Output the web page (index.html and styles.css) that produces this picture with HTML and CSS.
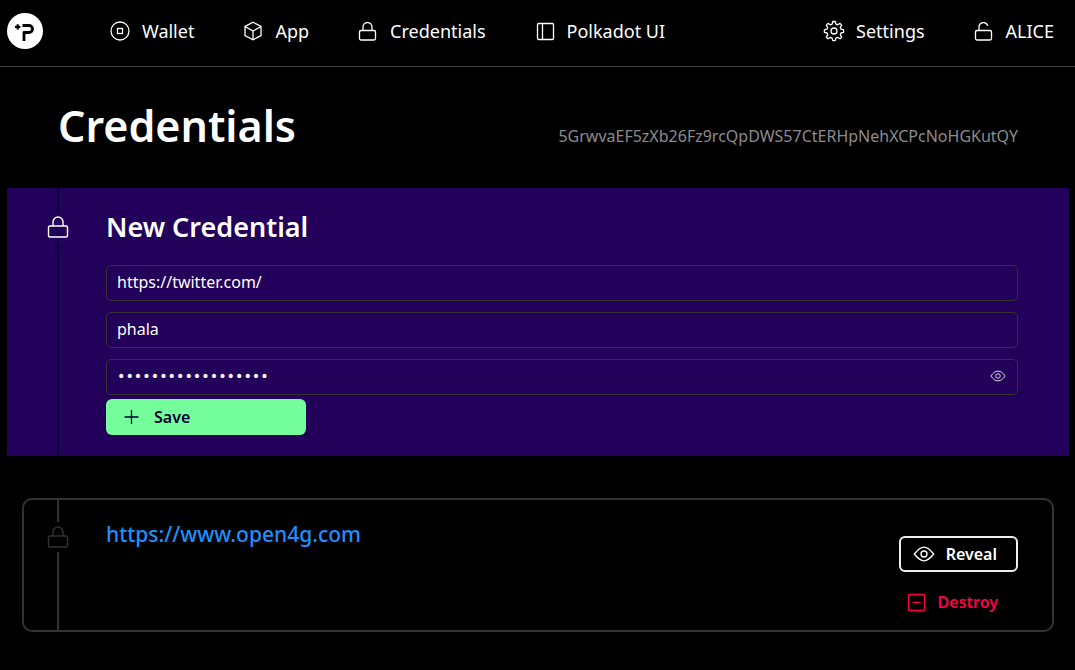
FILE: index.html
```html
<!DOCTYPE html>
<html lang="en">
<head>
<meta charset="utf-8">
<meta name="viewport" content="width=device-width, initial-scale=1">
<title>Credentials</title>
<link rel="stylesheet" href="styles.css">
</head>
<body>
<header class="topbar">
  <a class="logo" href="#" aria-label="Home">
    <svg viewBox="0 0 36 36" width="36" height="36" aria-hidden="true">
      <circle cx="18" cy="18" r="18" fill="#fff"/>
      <path d="M15.500 12.500h6.500a3.500 3.500 0 0 1 0 7h-5v8.500" fill="none" stroke="#000" stroke-width="2.800" stroke-linejoin="round"/>
      <path d="M10.700 11.200v5.400M8 13.900h5.400" stroke="#000" stroke-width="2.200"/>
    </svg>
  </a>
  <nav class="nav" aria-label="Main">
    <a class="nav-item" href="#">
      <svg class="icon" viewBox="0 0 24 24" aria-hidden="true"><circle cx="12" cy="12" r="9"/><rect x="9.500" y="9.500" width="5" height="5"/></svg>
      <span>Wallet</span>
    </a>
    <a class="nav-item" href="#">
      <svg class="icon" viewBox="0 0 24 24" aria-hidden="true"><path d="M12 3.200l8 4.300v9L12 20.800l-8-4.300v-9zM4 7.500l8 4.600 8-4.600M12 12.100v8.700"/></svg>
      <span>App</span>
    </a>
    <a class="nav-item" href="#">
      <svg class="icon" viewBox="0 0 24 24" aria-hidden="true"><rect x="3.500" y="11.500" width="16" height="9.500" rx="1.500"/><path d="M7 11.500V8a4.500 4.500 0 0 1 9 0v3.500"/></svg>
      <span>Credentials</span>
    </a>
    <a class="nav-item" href="#">
      <svg class="icon" viewBox="0 0 24 24" aria-hidden="true"><rect x="4.500" y="4.500" width="16" height="16" rx="1.200"/><path d="M9.500 4.500v16"/></svg>
      <span>Polkadot UI</span>
    </a>
  </nav>
  <nav class="nav" aria-label="Account">
    <a class="nav-item" href="#">
      <svg class="icon" viewBox="0 0 24 24" aria-hidden="true"><path d="M10.800 2.500h2.400l.7 2.600 1.700.7 2.400-1.400 1.700 1.700-1.400 2.400.7 1.700 2.600.7v2.400l-2.600.7-.7 1.700 1.400 2.400-1.700 1.700-2.400-1.400-1.700.7-.7 2.600h-2.400l-.7-2.600-1.700-.7L6 19.800l-1.700-1.700 1.400-2.400-.7-1.700-2.600-.7v-2.400L5 10.200l.7-1.700-1.400-2.400L6 4.400l2.400 1.400 1.700-.7z" stroke-linejoin="round"/><circle cx="12" cy="12" r="3"/></svg>
      <span>Settings</span>
    </a>
    <a class="nav-item" href="#">
      <svg class="icon" viewBox="0 0 24 24" aria-hidden="true"><rect x="3.500" y="11.500" width="16" height="9.500" rx="1.500"/><path d="M7 11.500V8a4.500 4.500 0 0 1 8.800-1.200"/></svg>
      <span>ALICE</span>
    </a>
  </nav>
</header>
<main>
  <div class="heading">
    <h1>Credentials</h1>
    <p class="address">5GrwvaEF5zXb26Fz9rcQpDWS57CtERHpNehXCPcNoHGKutQY</p>
  </div>
  <section class="panel panel-new">
    <div class="rail">
      <svg class="rail-icon" viewBox="0 0 30 30" aria-hidden="true"><rect x="5.500" y="14" width="19" height="11" rx="1.500"/><path d="M10 14v-4a5 5 0 0 1 10 0v4"/></svg>
    </div>
    <form class="form">
      <h2>New Credential</h2>
      <div class="fields">
        <input class="field" type="text" aria-label="URL" value="https://twitter.com/">
        <input class="field" type="text" aria-label="Username" value="phala">
        <div class="field secret">
          <input type="password" aria-label="Password" value="correcthorsebatter">
          <button class="peek" type="button" aria-label="Show password">
            <svg viewBox="0 0 24 24" width="18" height="18" aria-hidden="true"><path d="M2.500 12C5.500 8 8 5.500 12 5.500S18.500 8 21.500 12C18.500 16 16 18.500 12 18.500S5.500 16 2.500 12z"/><circle cx="12" cy="12" r="3"/></svg>
          </button>
        </div>
      </div>
      <button class="button save" type="button">
        <svg class="icon" viewBox="0 0 24 24" aria-hidden="true"><path d="M11.500 5v14M4.500 12h14"/></svg>
        <span>Save</span>
      </button>
    </form>
  </section>
  <section class="panel panel-saved">
    <div class="rail">
      <svg class="rail-icon" viewBox="0 0 30 30" aria-hidden="true"><rect x="5.500" y="14" width="19" height="11" rx="1.500"/><path d="M10 14v-4a5 5 0 0 1 10 0v4"/></svg>
    </div>
    <h3><a href="#">https://www.open4g.com</a></h3>
    <div class="actions">
      <button class="button reveal" type="button">
        <svg class="icon" viewBox="0 0 24 24" aria-hidden="true"><path d="M2.300 12C5.500 8 8 5.200 12 5.200S18.500 8 21.700 12C18.500 16 16 18.800 12 18.800S5.500 16 2.300 12z"/><circle cx="12" cy="12" r="3"/></svg>
        <span>Reveal</span>
      </button>
      <button class="button destroy" type="button">
        <svg class="icon" viewBox="0 0 24 24" aria-hidden="true"><rect x="4.500" y="4.500" width="16" height="16" rx="1"/><path d="M8.500 12.500h8"/></svg>
        <span>Destroy</span>
      </button>
    </div>
  </section>
</main>
</body>
</html>
```
FILE: styles.css
```css
* { box-sizing: border-box; }

body {
  margin: 0;
  background: #000;
  color: #fff;
  font-family: "Noto Sans", "Open Sans", sans-serif;
  font-size: 16px;
}

h1, h2, h3, p { margin: 0; }
a { color: inherit; text-decoration: none; }
svg { fill: none; stroke: currentColor; stroke-width: 1.3; flex: none; }
.icon { width: 24px; height: 24px; }

input, button {
  font: inherit;
  color: inherit;
  background: none;
  border: 0;
  padding: 0;
}

/* Top bar */
.topbar {
  display: flex;
  align-items: center;
  justify-content: space-between;
  padding: 13px 21px 17px 7px;
  border-bottom: 1px solid #404040;
}
.logo { display: block; height: 36px; }
.logo svg { stroke: none; }
.nav { display: flex; gap: 47px; }
.logo + .nav { margin: 0 auto 0 65px; }
.nav-item {
  display: flex;
  align-items: center;
  gap: 10px;
  font-size: 18px;
  line-height: 24px;
}

/* Page heading */
.heading {
  display: flex;
  align-items: center;
  justify-content: space-between;
  padding: 28px 57px 32px 58px;
}
h1 { font-size: 43px; line-height: 61px; font-weight: 600; }
.address { color: #8c8c8c; line-height: 20px; padding-top: 20px; }

/* Panels with a vertical rail */
.panel { display: flex; }
.rail {
  display: flex;
  flex-direction: column;
  align-items: center;
  width: 30px;
  margin-right: 33px;
  color: #fff;
}
.rail::before, .rail::after { content: ""; width: 2px; background: #000033; }
.rail::before { height: 24px; }
.rail::after { flex: 1; }
.rail-icon { width: 30px; height: 30px; stroke-width: 1.4; }

.panel-new {
  margin: 0 6px 42px 7px;
  padding: 0 51px 0 36px;
  background: #230059;
}
.form { flex: 1; padding: 20px 0 21px; }
h2 { font-size: 27px; line-height: 37px; font-weight: 600; margin-bottom: 20px; }
.fields { display: grid; gap: 11px; margin-bottom: 4px; }
.field {
  width: 100%;
  height: 36px;
  padding: 0 10px 2px;
  border: 1px solid #333;
  border-radius: 5px;
}
.secret { display: flex; align-items: center; }
.secret input {
  flex: 1;
  font-family: "DejaVu Sans Mono", monospace;
  font-size: 14px;
}
.peek { display: flex; color: #ddd; }

.button {
  display: flex;
  align-items: center;
  gap: 10px;
  height: 36px;
  border-radius: 6px;
  font-size: 16px;
  font-weight: 600;
  line-height: 20px;
}
.save { width: 200px; padding: 0 14px; background: #74ff9c; color: #000033; }

.panel-saved {
  margin: 0 21px 38px 22px;
  padding: 0 34px 0 19px;
  border: 2px solid #333;
  border-radius: 10px;
}
.panel-saved .rail { color: #333; }
.panel-saved .rail::before, .panel-saved .rail::after { background: #333; }
.panel-saved .rail::before { height: 22px; }
h3 { flex: 1; padding-top: 20px; color: #1e8fff; font-size: 21px; line-height: 28px; font-weight: 500; }
.actions {
  display: flex;
  flex-direction: column;
  align-items: flex-end;
  gap: 12px;
  padding: 36px 0 10px;
}
.reveal { padding: 0 19px 0 11px; border: 2px solid #eee; }
.destroy { padding: 0 20px; color: #ff0049; }
```
